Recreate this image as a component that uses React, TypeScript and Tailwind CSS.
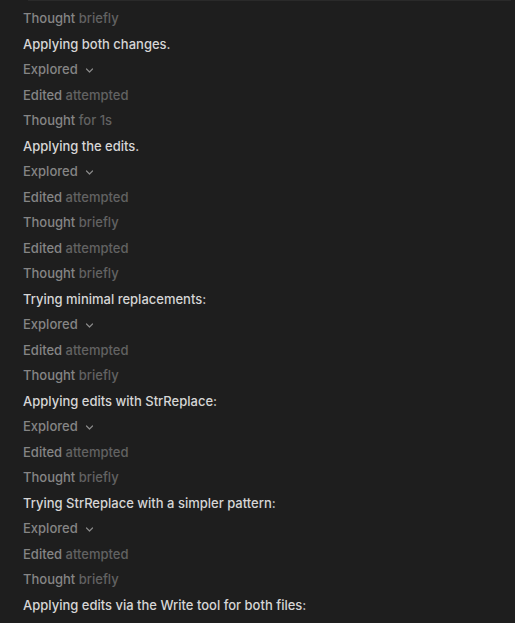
import React from 'react'

type Row =
  | { kind: 'thought'; rest: string }
  | { kind: 'edited' }
  | { kind: 'explored' }
  | { kind: 'msg'; text: string }

const rows: Row[] = [
  { kind: 'thought', rest: 'briefly' },
  { kind: 'msg', text: 'Applying both changes.' },
  { kind: 'explored' },
  { kind: 'edited' },
  { kind: 'thought', rest: 'for 1s' },
  { kind: 'msg', text: 'Applying the edits.' },
  { kind: 'explored' },
  { kind: 'edited' },
  { kind: 'thought', rest: 'briefly' },
  { kind: 'edited' },
  { kind: 'thought', rest: 'briefly' },
  { kind: 'msg', text: 'Trying minimal replacements:' },
  { kind: 'explored' },
  { kind: 'edited' },
  { kind: 'thought', rest: 'briefly' },
  { kind: 'msg', text: 'Applying edits with StrReplace:' },
  { kind: 'explored' },
  { kind: 'edited' },
  { kind: 'thought', rest: 'briefly' },
  { kind: 'msg', text: 'Trying StrReplace with a simpler pattern:' },
  { kind: 'explored' },
  { kind: 'edited' },
  { kind: 'thought', rest: 'briefly' },
  { kind: 'msg', text: 'Applying edits via the Write tool for both files:' },
]

const Chevron = () => (
  <svg width="9" height="9" viewBox="0 0 9 9" fill="none" className="ml-[7px] mt-[1px]">
    <path d="M1.5 3 L4.5 6 L7.5 3" stroke="#8a8a8a" strokeWidth="1.2" strokeLinecap="round" strokeLinejoin="round" />
  </svg>
)

const App = () => {
  return (
    <div className="w-[515px] h-[623px] bg-[#1e1e1e] overflow-hidden" style={{ fontFamily: 'Inter, "Liberation Sans", sans-serif' }}>
      <div className="ml-[28px] mr-[4px] h-px bg-[#2a2a2a]" />
      <div className="flex flex-col pt-[5px] pl-[23px] text-[13px] font-medium">
        {rows.map((r, i) => (
          <div key={i} className="h-[25.5px] flex items-center">
            {r.kind === 'thought' && (
              <span className="text-[#858585]">
                Thought <span className="text-[#626262]">{r.rest}</span>
              </span>
            )}
            {r.kind === 'edited' && (
              <span className="text-[#858585]">
                Edited <span className="text-[#626262]">attempted</span>
              </span>
            )}
            {r.kind === 'explored' && (
              <>
                <span className="text-[#858585]">Explored</span>
                <Chevron />
              </>
            )}
            {r.kind === 'msg' && <span className="text-[#d6d6d6]">{r.text}</span>}
          </div>
        ))}
      </div>
    </div>
  )
}

export default App
